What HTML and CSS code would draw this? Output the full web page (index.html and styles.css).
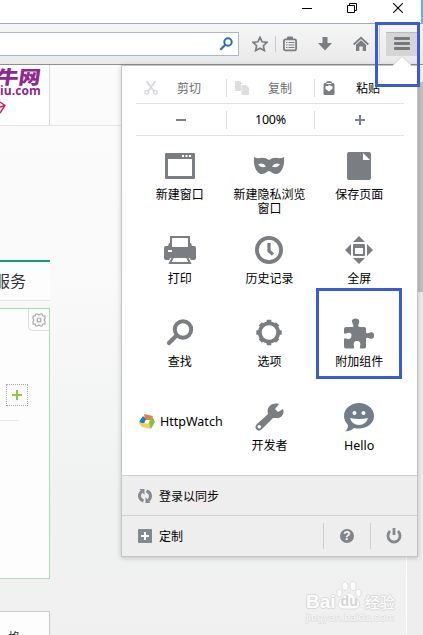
FILE: index.html
```
<!DOCTYPE html>
<html lang="zh-CN">
<head>
<meta charset="utf-8">
<title>附加组件</title>
<link rel="stylesheet" href="styles.css">
</head>
<body>
<div class="browser">
    <div class="titlebar">
        <svg class="win_min" width="10" height="10" viewBox="0 0 10 10"><path d="M0 5.5H10" stroke="#000"/></svg>
        <svg class="win_max" width="10" height="10" viewBox="0 0 10 10" fill="none" stroke="#000"><path d="M.5 2.5H7.500V9.500H.5ZM2.500 2.500V.5H9.500V7.500H7.500"/></svg>
        <svg class="win_close" width="10" height="10" viewBox="0 0 10 10"><path d="M.2.2L9.800 9.800M9.800.2L.2 9.800" stroke="#000" stroke-width="1.100"/></svg>
    </div>
    <div class="toolbar">
        <div class="search">
            <svg width="14" height="14" viewBox="0 0 14 14" fill="none" stroke="#2d6fad"><circle cx="9" cy="5" r="3.700" stroke-width="2"/><path d="M6.300 7.700L1.300 12.700" stroke-width="2.200"/></svg>
        </div>
        <svg class="t_star" width="16" height="16" viewBox="0 0 16 16"><path d="M8 1.300L10.100 5.800L15 6.300L11.400 9.700L12.400 14.600L8 12.200L3.600 14.600L4.600 9.700L1 6.300L5.900 5.800Z" fill="none" stroke="#7a7e83" stroke-width="1.700"/></svg>
        <span class="t_line"></span>
        <svg class="t_list" width="16" height="16" viewBox="0 0 16 16"><path d="M5 3V1.500Q5 .5 6 .5H10Q11 .5 11 1.500V3" fill="#7a7e83"/><rect x="1.900" y="3.400" width="12.200" height="11" rx="1.500" fill="none" stroke="#7a7e83" stroke-width="1.800"/><path d="M4 6.500H5.500M4 9H5.500M4 11.500H5.500M6.500 6.500H12.500M6.500 9H12.500M6.500 11.500H12.500" stroke="#7a7e83" stroke-width="1.200"/></svg>
        <svg class="t_down" width="14" height="16" viewBox="0 0 14 16"><path d="M4.500 1H9.500V7H14L7 14.500L0 7H4.500Z" fill="#7a7e83"/></svg>
        <svg class="t_home" width="16" height="16" viewBox="0 0 16 16"><path d="M.7 8.500L8 1.800L15.300 8.500" fill="none" stroke="#7a7e83" stroke-width="1.800"/><path d="M3 8.700L8 4.200L13 8.700V15H9.700V10.500H6.300V15H3Z" fill="#7a7e83"/></svg>
        <span class="t_line t_long"></span>
        <div class="menu_btn"><i></i><i></i><i></i></div>
    </div>
    <div class="page">
        <div class="logo">
            <b>牛网</b>
            <em>iu.com</em>
            <svg width="6" height="14" viewBox="0 0 6 14"><path d="M0 1L5 4.500L0 12M0 6L5 4.500" fill="none" stroke="#e5125d" stroke-width="1.400"/></svg>
        </div>
        <div class="logo_line"></div>
        <div class="service"><span>服务</span></div>
        <div class="card">
            <div class="card_set">
                <svg width="14" height="14" viewBox="0 0 14 14" fill="none" stroke="#a3a3a3" stroke-width="1.100"><path d="M4 1H5.500L7 2L8.500 1H10L11 3H13V5.500L12 7L13 8.500V11H11L10 13H8.500L7 12L5.500 13H4L3 11H1V8.500L2 7L1 5.500V3H3Z"/><circle cx="7" cy="7" r="2"/></svg>
            </div>
            <div class="card_add"></div>
            <div class="card_line"></div>
        </div>
        <div class="card2"><span>格</span></div>
        <div class="track"><div class="thumb"></div></div>
        <div class="watermark">
            <svg width="26" height="29" viewBox="0 0 26 29" fill="#fcfcfc" stroke="#d8d8d8" stroke-width=".8"><ellipse cx="3.500" cy="12" rx="2.800" ry="4"/><ellipse cx="9" cy="5" rx="3" ry="4.500"/><ellipse cx="17" cy="5" rx="3" ry="4.500"/><ellipse cx="22.500" cy="12" rx="2.800" ry="4"/><path d="M13 12C17 12 18 16 22 19C26 24 22 28 18 28H8C3 28 0 24 4 19C8 16 9 12 13 12Z"/></svg>
            <p><span>Bai</span><span class="du">du</span><span class="jy">经验</span></p>
            <small>jingyan.baidu.com</small>
        </div>
    </div>
</div>

<div class="panel">
    <div class="edit_row">
        <div class="off"><svg width="14" height="14" viewBox="0 0 14 14" fill="none" stroke="#d8dadc"><path d="M2.500 0L9.700 10M11.500 0L4.300 10" stroke-width="1.900"/><circle cx="2.600" cy="11.300" r="1.900" stroke-width="1.300"/><circle cx="11.400" cy="11.300" r="1.900" stroke-width="1.300"/></svg><span>剪切</span></div>
        <div class="off"><svg width="14" height="14" viewBox="0 0 14 14" fill="#dcdee0"><path d="M0 0H5V3H6V10H0Z"/><path d="M6.500 4H11L14 7V14H6.500Z"/><path d="M5 0L8 3H5Z"/></svg><span>复制</span></div>
        <div class="paste"><svg width="12" height="14" viewBox="0 0 12 14"><path d="M3 2Q3 0 6 0Q9 0 9 2H10Q11.500 2 11.500 4V12.500Q11.500 14 10 14H2Q.5 14 .5 12.500V4Q.5 2 2 2Z" fill="#7a7e83"/><path d="M2.500 5H5L6 4L9.500 5.500V7.500L6 10.500L2.500 8Z" fill="#fff"/><path d="M3.500 2.500H8.500" stroke="#fff"/></svg><span>粘贴</span></div>
    </div>
    <div class="edit_row zoom_row">
        <div><svg width="10" height="10" viewBox="0 0 10 10"><path d="M0 5H10" stroke="#7a8189" stroke-width="2"/></svg></div>
        <div class="pct">100%</div>
        <div><svg width="10" height="10" viewBox="0 0 10 10"><path d="M0 5H10M5 0V10" stroke="#7a8189" stroke-width="2"/></svg></div>
    </div>
    <div class="grid">
        <div class="item">
            <svg width="32" height="32" viewBox="0 0 32 32"><path fill="#7a7e83" fill-rule="evenodd" d="M2 3H30Q31 3 31 4V28Q31 29 30 29H2Q1 29 1 28V4Q1 3 2 3ZM4 9V26H28V9Z"/><path d="M18 6H20M21.500 6H23.500M25 6H27" stroke="#fff" stroke-width="2"/></svg>
            <span>新建窗口</span>
        </div>
        <div class="item">
            <svg width="32" height="32" viewBox="0 0 32 32"><path fill="#7a7e83" d="M1 7Q4 9 7 8Q12 7 16 10Q20 7 25 8Q28 9 31 7C32 17 28 24 23 24C19 24 18 21 16 21C14 21 13 24 9 24C4 24 0 17 1 7Z"/><path fill="#fff" d="M5 14.500Q10 12 13 16.500Q8 18.500 5 14.500ZM27 14.500Q22 12 19 16.500Q24 18.500 27 14.500Z"/></svg>
            <span>新建隐私浏览窗口</span>
        </div>
        <div class="item">
            <svg width="32" height="32" viewBox="0 0 32 32"><path fill="#7a7e83" d="M6 2H20L28 10V28Q28 30 26 30H6Q4 30 4 28V4Q4 2 6 2Z"/><path fill="#7a7e83" d="M19 2H26Q28 2 28 4V11L20 2.800Z"/><path fill="#fff" d="M20 3L27 10H20Z"/></svg>
            <span>保存页面</span>
        </div>
        <div class="item">
            <svg width="32" height="32" viewBox="0 0 32 32"><path fill="#7a7e83" d="M0 14Q0 12 2 12H4L5 9H27L28 12H30Q32 12 32 14V24Q32 26 30 26H2Q0 26 0 24Z"/><path d="M7 3H25V14H7Z" fill="#fff" stroke="#7a7e83" stroke-width="2"/><path d="M4 17H8" stroke="#fff" stroke-width="2"/><path d="M6 24H26L28 30H4Z" fill="#fff"/><path d="M9 23L6 29H26L23 23" fill="none" stroke="#7a7e83" stroke-width="2"/></svg>
            <span>打印</span>
        </div>
        <div class="item">
            <svg width="32" height="32" viewBox="0 0 32 32" fill="none" stroke="#7a7e83"><circle cx="16" cy="16" r="12.100" stroke-width="3.800"/><path d="M16 9V17L20 20.500" stroke-width="3.200"/></svg>
            <span>历史记录</span>
        </div>
        <div class="item">
            <svg width="32" height="32" viewBox="0 0 32 32" fill="#7a7e83"><path d="M16 2L22 8H10ZM16 30L22 24H10ZM2 16L8 10V22ZM30 16L24 10V22Z"/><path fill-rule="evenodd" d="M11 10H21Q22 10 22 11V21Q22 22 21 22H11Q10 22 10 21V11Q10 10 11 10ZM12 14V20H20V14Z"/></svg>
            <span>全屏</span>
        </div>
        <div class="item">
            <svg width="32" height="32" viewBox="0 0 32 32" fill="none" stroke="#7a7e83"><circle cx="19" cy="12.500" r="8.200" stroke-width="4"/><path d="M12.500 18.500L5 26" stroke-width="4.200" stroke-linecap="round"/></svg>
            <span>查找</span>
        </div>
        <div class="item">
            <svg width="32" height="32" viewBox="0 0 32 32" fill="none" stroke="#7a7e83"><circle cx="16" cy="15.500" r="9.200" stroke-width="3.800"/><g stroke-width="4.600"><path d="M16 2.800V6M16 25V28.200M3.300 15.500H7M25 15.500H28.700"/><path d="M7.300 6.800L9.500 9M22.500 22L24.700 24.200M24.700 6.800L22.500 9M9.500 22L7.300 24.200"/></g></svg>
            <span>选项</span>
        </div>
        <div class="item">
            <svg width="32" height="32" viewBox="0 0 32 32" fill="#7a7e83"><path d="M3 10H9Q11.500 10 10 7.500Q7 1.500 12.500 1.500Q18 1.500 15.500 7.500Q14.500 10 17 10H21Q23 10 23 12V15Q23 17 25.500 16Q31 13.500 31 18.500Q31 23.500 25.500 21Q23 20 23 22V29.500Q23 31.500 21 31.500H17.500Q16.500 31.500 17 29.500Q18.500 24 14 24Q9.500 24 11 29.500Q11.500 31.500 10.500 31.500H3Q1 31.500 1 29.500V22Q1 21 3 21.500Q8.500 23 8.500 18.500Q8.500 14.500 3 16.500Q1 17 1 16V12Q1 10 3 10Z"/></svg>
            <span>附加组件</span>
        </div>
        <div class="item watch">
            <svg width="16" height="16" viewBox="0 0 16 16"><path fill="#ef7b4c" d="M5 0L14 2L11 7L6 6Z"/><path fill="#1685b5" d="M4 2L7 5L5 10L0 8Z"/><path fill="#84c14a" d="M13 2L16 8L12 15L9 10L11 6Z"/><path fill="#f3cf5a" d="M0 9L5 9H10L12 15L3 13Z"/><path fill="#fff" d="M7 6H11L9.500 9.500H5.500Z"/></svg>
            <span class="en">HttpWatch</span>
        </div>
        <div class="item">
            <svg width="32" height="32" viewBox="0 0 32 32"><path fill="#7a7e83" d="M26 3L22 8L25 11L30 8C32 13 28 18 23 17L20 17L9 28Q6 31 3.500 28.500Q1 26 4 23L15 13C13 6 19 1 26 3Z"/><circle cx="6.300" cy="25.800" r="1.800" fill="#fff"/></svg>
            <span>开发者</span>
        </div>
        <div class="item">
            <svg width="32" height="32" viewBox="0 0 32 32"><path fill="#717d89" d="M16 2C24 2 31 7.500 31 15C31 22.500 24 27.500 16 27.500Q13 27.500 11 27Q8 30 2 30.500Q5 28 5 24Q1 20 1 15C1 7.500 8 2 16 2Z"/><circle cx="11.500" cy="12" r="2" fill="#fff"/><circle cx="20.500" cy="12" r="2" fill="#fff"/><path fill="#fff" d="M7 17Q16 19 25 17Q23 24 16 24Q9 24 7 17Z"/></svg>
            <span class="en">Hello</span>
        </div>
    </div>
    <div class="foot sync">
        <svg width="14" height="14" viewBox="0 0 14 14"><g fill="none" stroke="#858b91" stroke-width="3"><path d="M5.500 12Q1.500 10.500 1.500 7Q1.500 4 4 2.500"/><path d="M8.500 2Q12.500 3.500 12.500 7Q12.500 10 10 11.500"/></g><path fill="#858b91" d="M1.500 0H6.500V6ZM12.500 14H7.500V8Z"/></svg>
        <span>登录以同步</span>
    </div>
    <div class="foot">
        <svg width="14" height="14" viewBox="0 0 14 14"><rect width="14" height="14" rx="1" fill="#838991"/><path d="M3 7H11M7 3V11" stroke="#fff" stroke-width="2"/></svg>
        <span>定制</span>
        <div class="foot_btn help"><b>?</b></div>
        <div class="foot_btn"><svg width="16" height="16" viewBox="0 0 16 16" fill="none" stroke="#85898e" stroke-width="2.800"><path d="M4 3Q2 5 2 8A6 6 0 0 0 14 8Q14 5 12 3M8 0V7"/></svg></div>
    </div>
</div>
<svg class="arrow" width="18" height="10" viewBox="0 0 18 10"><path d="M0 9L9 0L18 9V10H0Z" fill="#fff"/><path d="M0 9L9 .5L18 9" fill="none" stroke="#c8c8c8" stroke-width=".8"/></svg>
<div class="mark mark_menu"></div>
<div class="mark mark_addon"></div>
</body>
</html>
```
FILE: styles.css
```
*{box-sizing: border-box;}
body{ margin: 0; padding: 0; width: 423px; height: 635px; overflow: hidden; position: relative;
    font-family: "Noto Sans CJK SC", sans-serif; font-size: 12px; color: #000;
}
svg{ display: block; flex: none; }
p{ margin: 0; }
.browser{ width: 423px; height: 635px; display: flex; flex-direction: column; }

/* 标题栏 */
.titlebar{ height: 23px; padding: 3px 20px 0 0; display: flex; justify-content: flex-end;
    background: linear-gradient(#5ab5ea,#5ab5ea) right/2px 100% no-repeat #fff;
}
.win_min{ margin-right: 35px; }
.win_max{ margin-right: 36px; }

/* 工具栏 */
.toolbar{ height: 42px; border-top: 1px solid #a3adb7; border-bottom: 1px solid #8f8f8f;
    background: linear-gradient(#f6f6f6,#e9e9e9); display: flex; align-items: center; flex: none;
}
.search{ width: 239px; height: 24px; border: 1px solid #acb8c3; border-left: 0; background-color: #fff;
    padding: 4px 5px 0 0; display: flex; justify-content: flex-end;
}
.t_star{ margin-left: 13px; }
.t_line{ width: 1px; height: 16px; background-color: #c8cbce; margin: 0 6px 0 7px; }
.t_down{ margin-left: 20px; }
.t_home{ margin-left: 21px; }
.t_long{ height: 38px; margin: 0 6px 0 10px; }
.menu_btn{ width: 33px; height: 24px; background-color: #d5d5d5; border-top: 1px solid #bbb;
    padding: 4px 0 0 8px; flex: none;
}
.menu_btn > i{ display: block; width: 16px; height: 3px; border-radius: 1px; background-color: #75797e; margin-bottom: 2px; }

/* 网页 */
.page{ height: 570px; position: relative; background: linear-gradient(#fbfbfb 0,#f9faf9 200px,#f0f2f1 430px,#eff0ef); }
.logo{ width: 50px; height: 60px; background-color: #fff; border-right: 1px solid #d8d8d8; overflow: hidden;
    color: #90278e; display: flex; flex-direction: column;
}
.logo > b{ font-size: 22px; line-height: 20px; height: 20px; font-weight: 900; align-self: flex-end;
    padding: 1px 8px 0 0; transform: skewX(-8deg) scaleY(.85); white-space: nowrap; }
.logo > em{ font: bold 12px/14px "Open Sans", sans-serif; margin-top: -1px; letter-spacing: .1px; }
.logo > svg{ margin-top: 3px; }
.logo_line{ height: 1px; background-color: #e6e6e6; }
.service{ width: 50px; height: 41px; margin-top: 134px; border-top: 2px solid #0ba36b; border-bottom: 1px solid #e4e6e5;
    background-color: #fdfdfd; font-size: 16px; line-height: 38px; color: #333;
    display: flex; justify-content: flex-end; padding-right: 24px;
}
.service > span{ flex: none; margin-top: -1px; }
.card{ width: 50px; height: 271px; margin-top: 7px; border: 1px solid #abdcba; border-left: 0; background-color: #fdfdfd;
    display: flex; flex-direction: column;
}
.card_set{ width: 21px; height: 22px; border: 1px solid #ddd; border-width: 0 0 1px 1px; border-radius: 0 0 0 5px;
    align-self: flex-end; padding: 4px 0 0 3px;
}
.card_add{ width: 22px; height: 22px; margin: 53px 0 0 6px; border: 1px dotted #aaa;
    background: linear-gradient(#8fc748,#8fc748) center/10px 2px no-repeat, linear-gradient(#8fc748,#8fc748) center/2px 10px no-repeat;
}
.card_line{ width: 19px; height: 1px; background-color: #eaeaea; margin-top: 14px; }
.card2{ width: 50px; height: 24px; margin-top: 32px; border: 1px solid #c9cbca; border-width: 1px 1px 0 0;
    background-color: #fdfdfd; overflow: hidden; padding: 16px 0 0 8px; line-height: 18px; color: #333;
}
.track{ position: absolute; right: 0; top: 0; width: 17px; height: 570px; border-left: 1px solid #fff; background-color: #eee; }
.thumb{ width: 6px; height: 210px; margin: 17px 0 0 10px; background-color: #c1c1c1; }

.watermark{ position: absolute; left: 306px; top: 516px; width: 90px; color: #fcfcfc; }
.watermark > svg{ margin-left: 30px; }
.watermark > p{ display: flex; align-items: center; margin-top: -17px; height: 17px; position: relative;
    font: bold 19px/17px "Liberation Sans", sans-serif;
    text-shadow: 1px 0 0 #d9d9d9, -1px 0 0 #d9d9d9, 0 1px 0 #d9d9d9, 0 -1px 0 #d9d9d9;
}
.watermark .du{ font-size: 14px; color: #d4d4d4; margin-left: 5px; text-shadow: none; }
.watermark .jy{ font: 500 15px/17px "Noto Sans CJK SC", sans-serif; margin-left: 7px; white-space: nowrap; }
.watermark > small{ display: block; font: 11px/14px "Liberation Sans", sans-serif;
    text-shadow: 0 0 1px #bbb, 0 1px 0 #e0e0e0; white-space: nowrap; }

/* 菜单面板 */
.panel{ position: absolute; left: 121px; top: 65px; width: 297px; height: 492px; background-color: #fff;
    border: 1px solid #c2c5c4; box-shadow: 0 1px 5px rgba(0,0,0,.2);
    padding-top: 6px; display: flex; flex-direction: column;
}
.edit_row{ width: 268px; height: 32px; margin-left: 14px; border-bottom: 1px solid #e2e2e2; display: flex; align-items: center; flex: none; }
.edit_row > div{ width: 88px; height: 18px; border-right: 1px solid #dcdcdc; display: flex; align-items: center; }
.edit_row > div:nth-of-type(1){ width: 91px; }
.edit_row > div:nth-of-type(3){ width: 89px; border-right: 0; }
.off{ color: #6d6d6d; padding-left: 8px; }
.off > span{ margin-left: 19px; }
.paste{ padding-left: 8px; }
.paste > span{ margin-left: 21px; }
.zoom_row > div{ justify-content: center; }
.pct, .en{ font-family: "Noto Sans", sans-serif; }
.zoom_row > .pct{ font-size: 12.500px; letter-spacing: -.2px; }
.grid{ width: 269px; height: 339px; margin-left: 13px; padding-top: 14px; display: grid; flex: none;
    grid-template-columns: repeat(3, 1fr); grid-auto-rows: 83.600px;
}
.item{ display: flex; flex-direction: column; align-items: center; text-align: center; line-height: 14px; }
.item > span{ width: 74px; margin-top: 5px; }
.item > .en{ font-size: 12.500px; margin-top: 6px; }
.item.watch{ flex-direction: row; padding: 0 0 42px 4px; }
.watch > .en{ margin: 0 0 0 5px; width: auto; }
.foot{ height: 40px; background-color: #eee; border-top: 1px solid #cfcfcf; display: flex; align-items: center; padding-left: 16px; flex: none; }
.foot > span{ margin: -1px 0 0 7px; }
.foot:last-child{ height: 41px; }
.foot_btn{ width: 47px; height: 26px; border-left: 1px solid #cecece; display: flex; align-items: center; justify-content: center; }
.help{ margin-left: auto; }
.help > b{ width: 14px; height: 14px; border-radius: 7px; background-color: #7f858b; color: #fff;
    font: bold 12px/14px "Liberation Sans", sans-serif; text-align: center;
}
.arrow{ position: absolute; left: 393px; top: 56px; }
.mark{ position: absolute; border: 3px solid #3a5bd2; }
.mark_menu{ left: 375px; top: 22px; width: 45px; height: 65px; }
.mark_addon{ left: 316px; top: 288px; width: 86px; height: 91px; }
```
